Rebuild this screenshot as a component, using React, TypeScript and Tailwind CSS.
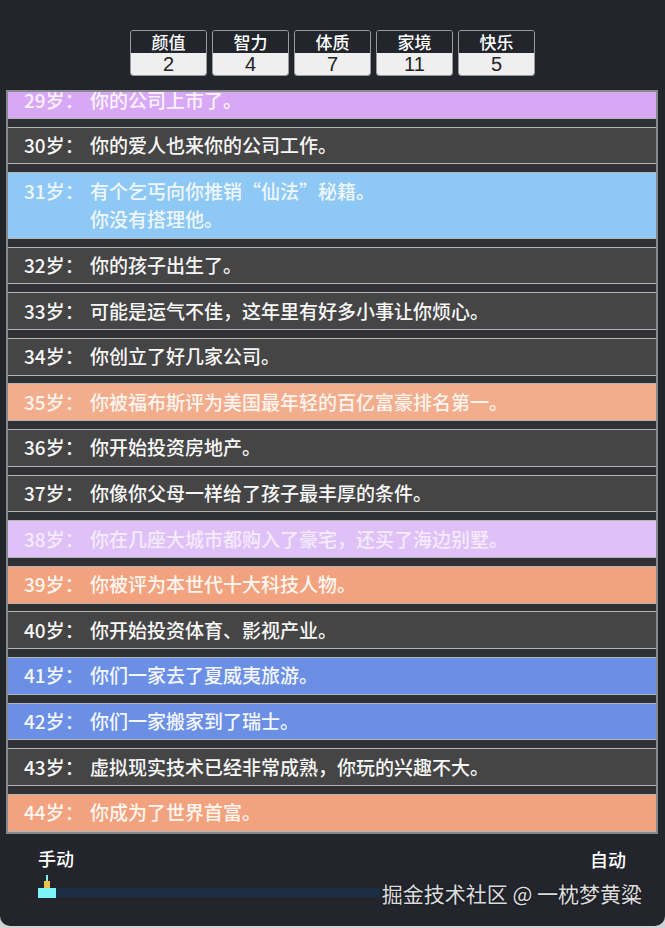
import React from 'react';

type Stat = { label: string; value: number };

const stats: Stat[] = [
  { label: '颜值', value: 2 },
  { label: '智力', value: 4 },
  { label: '体质', value: 7 },
  { label: '家境', value: 11 },
  { label: '快乐', value: 5 },
];

type Entry = { age: number; lines: string[]; tone?: string };

// row tones by event grade
const tones: Record<string, string> = {
  normal: 'bg-[#454545] text-[#f7f7f7]',
  purple: 'bg-[#d8a8f7] text-[#fbf4ff]',
  lilac: 'bg-[#dfc1f8] text-[#f4ebfd]',
  sky: 'bg-[#8ec8f4] text-[#eef7ff]',
  blue: 'bg-[#6b8fe5] text-[#f4f7ff]',
  salmon: 'bg-[#f1ad8c] text-[#fff4ee]',
  orange: 'bg-[#f2a27e] text-[#fff6f0]',
};

const entries: Entry[] = [
  { age: 29, lines: ['你的公司上市了。'], tone: 'purple' },
  { age: 30, lines: ['你的爱人也来你的公司工作。'] },
  { age: 31, lines: ['有个乞丐向你推销“仙法”秘籍。', '你没有搭理他。'], tone: 'sky' },
  { age: 32, lines: ['你的孩子出生了。'] },
  { age: 33, lines: ['可能是运气不佳，这年里有好多小事让你烦心。'] },
  { age: 34, lines: ['你创立了好几家公司。'] },
  { age: 35, lines: ['你被福布斯评为美国最年轻的百亿富豪排名第一。'], tone: 'salmon' },
  { age: 36, lines: ['你开始投资房地产。'] },
  { age: 37, lines: ['你像你父母一样给了孩子最丰厚的条件。'] },
  { age: 38, lines: ['你在几座大城市都购入了豪宅，还买了海边别墅。'], tone: 'lilac' },
  { age: 39, lines: ['你被评为本世代十大科技人物。'], tone: 'orange' },
  { age: 40, lines: ['你开始投资体育、影视产业。'] },
  { age: 41, lines: ['你们一家去了夏威夷旅游。'], tone: 'blue' },
  { age: 42, lines: ['你们一家搬家到了瑞士。'], tone: 'blue' },
  { age: 43, lines: ['虚拟现实技术已经非常成熟，你玩的兴趣不大。'] },
  { age: 44, lines: ['你成为了世界首富。'], tone: 'orange' },
];

const cjk = "font-['Noto_Sans_CJK_SC',sans-serif]";

function StatBox({ label, value }: Stat) {
  return (
    <div className="w-[77px] border border-[#9a9b9e] rounded-[3px] overflow-hidden">
      <div className={`h-[22px] bg-[#22252c] text-white text-[17px] font-medium leading-[22px] text-center ${cjk}`}>
        {label}
      </div>
      <div className="h-[22px] bg-[#efefef] text-[#222] text-[20px] leading-[22px] text-center font-['Liberation_Sans',sans-serif]">
        {value}
      </div>
    </div>
  );
}

function Row({ age, lines, tone = 'normal' }: Entry) {
  return (
    <li className={`flex pl-[16px] py-[3.5px] border-y border-[#b4b4b4] text-[19px] font-medium leading-[28.8px] ${cjk} ${tones[tone]}`}>
      <span className="w-[66px] shrink-0">{age}岁：</span>
      <div className="flex flex-col">
        {lines.map((line) => (
          <span key={line}>{line}</span>
        ))}
      </div>
    </li>
  );
}

export default function App() {
  return (
    <div className="min-h-screen bg-[#d2d3d5]">
      <div className="relative h-[926px] bg-[#22252c] rounded-b-[10px] flex flex-col">
        {/* attribute summary */}
        <div className="flex justify-center gap-[5px] pt-[30px]">
          {stats.map((s) => (
            <StatBox key={s.label} {...s} />
          ))}
        </div>

        {/* life trajectory, scrolled a little past the first entry */}
        <div className="mt-[14px] ml-[6px] mr-[7px] h-[744px] border-2 border-[#87898d] bg-[#303135] overflow-hidden">
          <ul className="-mt-[11px] flex flex-col gap-[7.8px]">
            {entries.map((e) => (
              <Row key={e.age} {...e} />
            ))}
          </ul>
        </div>

        {/* speed control */}
        <div className={`mt-[12px] pl-[38px] pr-[39px] flex justify-between text-white text-[18px] font-medium leading-[25px] ${cjk}`}>
          <span>手动</span>
          <span className="pt-[1px]">自动</span>
        </div>
        <div className="mt-[3px] mx-[38px] flex items-end">
          <div className="w-[18px] flex flex-col items-center">
            <div className="w-[2px] h-[6px] bg-[#7ff3f3]" />
            <div className="w-[6px] h-[7px] bg-[#f0c04a]" />
            <div className="w-[18px] h-[10px] bg-[#7df4f7]" />
          </div>
          <div className="flex-1 h-[9px] mb-[1px] bg-[#1b2e44]" />
        </div>

        <div className={`absolute right-[23px] bottom-[19px] pl-[2px] bg-[#22252c] text-[#dcdcdc] text-[21px] leading-[28px] ${cjk} [text-shadow:0_0_2px_rgba(0,0,0,0.6)]`}>
          掘金技术社区 @ 一枕梦黄粱
        </div>
      </div>
    </div>
  );
}
